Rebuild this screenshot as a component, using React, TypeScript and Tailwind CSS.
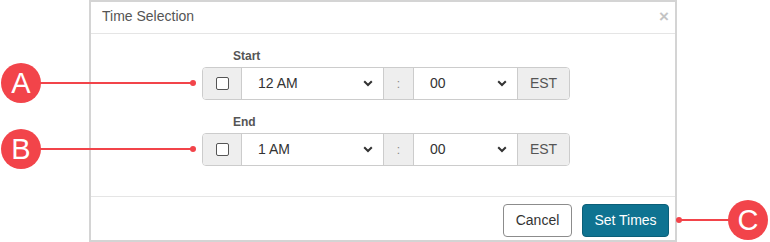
import React from "react";

const Chevron = () => (
  <svg width="10" height="7" viewBox="0 0 10 7" className="shrink-0">
    <path d="M1.2 1.2 L5 5 L8.8 1.2" fill="none" stroke="#333" strokeWidth="2" />
  </svg>
);

const Select = ({ value, width }: { value: string; width: string }) => (
  <div className={`${width} flex items-center justify-between bg-white pl-[16px] pr-[10px] text-[14px] text-[#333] border-l border-[#ccc]`}>
    <span>{value}</span>
    <Chevron />
  </div>
);

const TimeRow = ({ label, hour }: { label: string; hour: string }) => (
  <div className="flex flex-col">
    <div className="ml-[31px] mb-[4px] text-[12px] font-bold text-[#555] leading-[14px]">{label}</div>
    <div className="flex h-[33px] border border-[#ccc] rounded-[4px] overflow-hidden">
      <div className="w-[38px] flex items-center justify-center bg-[#eee]">
        <div className="w-[13px] h-[13px] border border-[#555] rounded-[2px] bg-white" />
      </div>
      <Select value={hour} width="w-[142px]" />
      <div className="w-[30px] flex items-center justify-center bg-[#eee] border-l border-[#ccc] text-[12px] text-[#888]">:</div>
      <Select value="00" width="w-[104px]" />
      <div className="w-[52px] flex items-center justify-center bg-[#eee] border-l border-[#ccc] text-[14px] text-[#555]">EST</div>
    </div>
  </div>
);

const Badge = ({ letter, className }: { letter: string; className: string }) => (
  <div className={`absolute w-[40px] h-[40px] rounded-full bg-[#f2444a] text-white flex items-center justify-center text-[29px] leading-none ${className}`}>
    {letter}
  </div>
);

export default function App() {
  return (
    <div className="relative w-[770px] h-[242px] bg-white overflow-hidden" style={{ fontFamily: '"Liberation Sans", Arial, sans-serif' }}>
      <div className="ml-[89px] w-[588px] h-[242px] border-2 border-[#d4d4d4] flex flex-col">
        <div className="h-[32px] flex items-center justify-between border-b border-[#e5e5e5] pl-[11px] pr-[6px]">
          <span className="text-[14px] text-[#555] -mt-[2px]">Time Selection</span>
          <span className="text-[17px] font-bold text-[#c4c4c4] leading-none -mt-[3px]">×</span>
        </div>
        <div className="h-[163px] flex flex-col items-center pt-[15px] gap-[15px] border-b border-[#e5e5e5] pl-[6px]">
          <TimeRow label="Start" hour="12 AM" />
          <TimeRow label="End" hour="1 AM" />
        </div>
        <div className="flex-1 flex justify-end items-start pt-[7px] pr-[6px] gap-[10px]">
          <button className="h-[33px] w-[69px] border border-[#8c8c8c] rounded-[4px] bg-white text-[14px] text-[#333]">Cancel</button>
          <button className="h-[33px] w-[87px] border border-[#0b5f78] rounded-[4px] bg-[#0f7391] text-[14px] text-white">Set Times</button>
        </div>
      </div>

      {/* annotations */}
      <Badge letter="A" className="left-[1px] top-[63px]" />
      <div className="absolute left-[40px] top-[82px] w-[152px] h-[2px] bg-[#f2444a]" />
      <div className="absolute left-[190px] top-[80px] w-[6px] h-[6px] rounded-full bg-[#f2444a]" />

      <Badge letter="B" className="left-[1px] top-[129px]" />
      <div className="absolute left-[40px] top-[148px] w-[152px] h-[2px] bg-[#f2444a]" />
      <div className="absolute left-[190px] top-[146px] w-[6px] h-[6px] rounded-full bg-[#f2444a]" />

      <Badge letter="C" className="left-[728px] top-[200px]" />
      <div className="absolute left-[679px] top-[219px] w-[50px] h-[2px] bg-[#f2444a]" />
      <div className="absolute left-[676px] top-[217px] w-[6px] h-[6px] rounded-full bg-[#f2444a]" />
    </div>
  );
}
